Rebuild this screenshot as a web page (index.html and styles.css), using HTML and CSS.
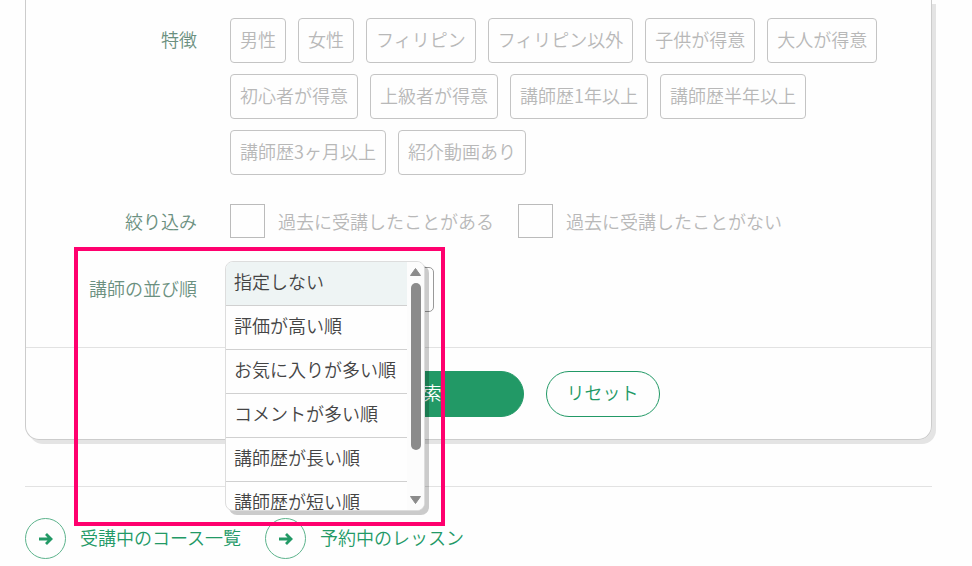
FILE: index.html
```html
<!DOCTYPE html>
<html lang="ja">
<head>
  <meta charset="UTF-8">
  <meta name="viewport" content="width=device-width, initial-scale=1.0">
  <title>講師検索</title>
  <link rel="stylesheet" href="styles.css">
</head>
<body>
  <form class="search-card">
    <div class="search-row">
      <div class="row-label" id="featureLabel">特徴</div>
      <div class="chips" role="group" aria-labelledby="featureLabel">
        <button type="button" class="chip">男性</button>
        <button type="button" class="chip">女性</button>
        <button type="button" class="chip">フィリピン</button>
        <button type="button" class="chip">フィリピン以外</button>
        <button type="button" class="chip">子供が得意</button>
        <button type="button" class="chip">大人が得意</button>
        <button type="button" class="chip">初心者が得意</button>
        <button type="button" class="chip">上級者が得意</button>
        <button type="button" class="chip">講師歴1年以上</button>
        <button type="button" class="chip">講師歴半年以上</button>
        <button type="button" class="chip">講師歴3ヶ月以上</button>
        <button type="button" class="chip">紹介動画あり</button>
      </div>
    </div>

    <div class="search-row">
      <div class="row-label short" id="filterLabel">絞り込み</div>
      <div class="checks" role="group" aria-labelledby="filterLabel">
        <label class="check"><input type="checkbox" name="taken">過去に受講したことがある</label>
        <label class="check"><input type="checkbox" name="not_taken">過去に受講したことがない</label>
      </div>
    </div>

    <div class="search-row sort-row">
      <label class="row-label" for="sort">講師の並び順</label>
      <div class="sort-field">
        <select id="sort" name="sort">
          <option>指定しない</option>
          <option>評価が高い順</option>
          <option>お気に入りが多い順</option>
          <option>コメントが多い順</option>
          <option>講師歴が長い順</option>
          <option>講師歴が短い順</option>
        </select>
        <div class="sort-menu">
          <ul class="sort-list" role="listbox" aria-label="講師の並び順">
            <li role="option" class="selected" aria-selected="true">指定しない</li>
            <li role="option">評価が高い順</li>
            <li role="option">お気に入りが多い順</li>
            <li role="option">コメントが多い順</li>
            <li role="option">講師歴が長い順</li>
            <li role="option">講師歴が短い順</li>
          </ul>
          <div class="scrollbar">
            <svg width="11" height="8" viewBox="0 0 11 8"><path d="M5.5 0.5 L10.5 7.5 H0.5 Z" fill="#8b8b8b" stroke="#8b8b8b" stroke-linejoin="round"/></svg>
            <div class="thumb"></div>
            <svg width="11" height="8" viewBox="0 0 11 8"><path d="M5.5 7.5 L10.5 0.5 H0.5 Z" fill="#8b8b8b" stroke="#8b8b8b" stroke-linejoin="round"/></svg>
          </div>
        </div>
      </div>
      <div class="highlight"></div>
    </div>

    <div class="actions">
      <button type="submit" class="btn-search">
        <svg width="20" height="20" viewBox="0 0 20 20" fill="none" stroke="#fff" stroke-width="2"><circle cx="8" cy="8" r="6"/><path d="M12.5 12.5 L18 18"/></svg>
        検索
      </button>
      <button type="reset" class="btn-reset">リセット</button>
    </div>
  </form>

  <nav class="links">
    <a href="#">
      <span class="circle"><svg width="14" height="12" viewBox="0 0 14 12" fill="none" stroke="#229966" stroke-width="2.8"><path d="M0 6 H12 M7 1 L12 6 L7 11"/></svg></span>
      <span class="link-text">受講中のコース一覧</span>
    </a>
    <a href="#">
      <span class="circle"><svg width="14" height="12" viewBox="0 0 14 12" fill="none" stroke="#229966" stroke-width="2.8"><path d="M0 6 H12 M7 1 L12 6 L7 11"/></svg></span>
      <span class="link-text">予約中のレッスン</span>
    </a>
  </nav>
</body>
</html>
```

FILE: styles.css
```css
* {
  box-sizing: border-box;
}
body {
  margin: 0;
  padding: 0 40px 0 25px;
  background-color: #fefefe;
  font-family: "Noto Sans CJK JP", sans-serif;
  font-size: 18px;
  font-weight: 350;
  line-height: 24px;
}
button, input, select {
  margin: 0;
  font: inherit;
}
.search-card {
  border: 1px solid #ccc;
  border-top: none;
  border-radius: 0 0 14px 14px;
  box-shadow: 4px 4px 0 #e4e4e4;
  padding-top: 18px;
}
.search-row {
  display: flex;
  gap: 33px;
  padding-right: 40px;
  margin-bottom: 29px;
}
.row-label {
  flex: 0 0 171px;
  line-height: 43px;
  text-align: right;
  color: #6b9080;
}
.row-label.short {
  line-height: 34px;
}
.chips {
  display: flex;
  flex-wrap: wrap;
  gap: 11px 12px;
}
.chip {
  height: 45px;
  padding: 0 9px 4px;
  border: 1px solid #c4c4c4;
  border-radius: 4px;
  background-color: #fefefe;
  color: #b8b8b8;
}
.checks {
  display: flex;
  gap: 24px;
}
.check {
  display: flex;
  align-items: center;
  gap: 13px;
  color: #b8b8b8;
}
.check input {
  appearance: none;
  width: 35px;
  height: 34px;
  border: 1px solid #bbb;
  background-color: #fefefe;
}

/* sort order */
.sort-row {
  position: relative;
  margin-bottom: 35px;
}
.sort-field {
  position: relative;
}
.sort-field select {
  appearance: none;
  width: 204px;
  height: 45px;
  padding: 0 10px;
  border: 1px solid #999;
  border-radius: 5px;
  background-color: #fefefe;
  color: #444;
}
.sort-menu {
  position: absolute;
  top: -6px;
  left: -5px;
  z-index: 2;
  display: flex;
  width: 200px;
  height: 250px;
  border: 1px solid #ddd;
  border-radius: 8px;
  background-color: #fefefe;
  box-shadow: 4px 4px 0 rgba(0, 0, 0, 0.2);
  overflow: hidden;
}
.sort-list {
  flex: 1;
  margin: 0;
  padding: 0;
  list-style: none;
  white-space: nowrap;
  color: #444;
}
.sort-list li {
  height: 44px;
  padding: 7px 0 0 8px;
  border-bottom: 1px solid #d0d0d0;
}
.sort-list .selected {
  background-color: #eef4f4;
}
.scrollbar {
  display: flex;
  flex-direction: column;
  align-items: center;
  width: 17px;
  padding: 6px 0;
  background-color: #fcfcfc;
}
.thumb {
  width: 10px;
  height: 167px;
  margin: 7px 0 auto;
  border-radius: 5px;
  background-color: #8b8b8b;
}
.highlight {
  position: absolute;
  top: -20px;
  left: 48px;
  z-index: 3;
  width: 371px;
  height: 279px;
  border: 4px solid #ff006e;
  pointer-events: none;
}

.actions {
  display: flex;
  justify-content: center;
  gap: 22px;
  padding: 23px 0 22px;
  border-top: 1px solid #e2e2e2;
}
.actions button {
  height: 46px;
  padding: 0 0 5px;
  border: 1px solid #229966;
  border-radius: 23px;
}
.actions .btn-search {
  display: flex;
  align-items: center;
  justify-content: center;
  gap: 6px;
  width: 226px;
  background-color: #229966;
  color: #fff;
}
.btn-reset {
  width: 114px;
  background-color: #fefefe;
  color: #229966;
}

.links {
  display: flex;
  gap: 24px;
  margin-top: 46px;
  padding: 31px 0 8px;
  border-top: 1px solid #e2e2e2;
}
.links a {
  display: flex;
  align-items: center;
  gap: 14px;
  color: #229966;
  text-decoration: none;
}
.circle {
  display: flex;
  align-items: center;
  justify-content: center;
  width: 41px;
  height: 41px;
  border: 1px solid #5cb38c;
  border-radius: 50%;
}
.link-text {
  padding-bottom: 4px;
}
```
